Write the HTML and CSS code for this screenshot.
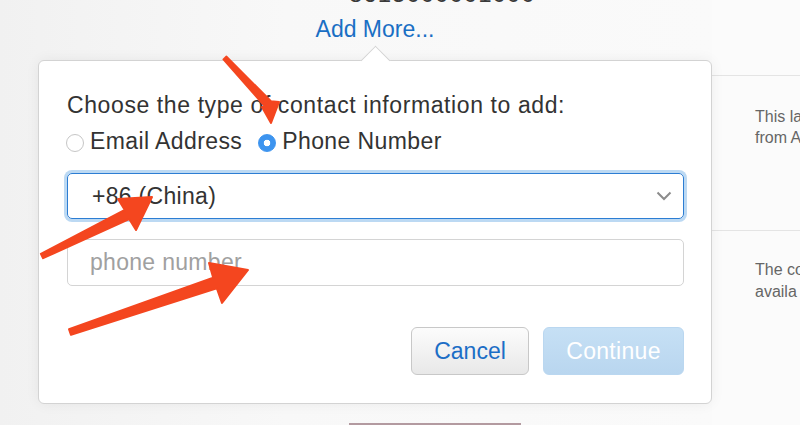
FILE: index.html
```html
<!DOCTYPE html>
<html lang="en">

<head>
    <meta charset="UTF-8">
    <meta name="viewport" content="width=device-width, initial-scale=1.0">
    <title>Add More</title>
    <link rel="stylesheet" href="styles.css">
</head>

<body>
    <div class="page">
        <div class="main">
            <div class="peek"><span>+8615000001000</span></div>
            <div class="add-more">Add More...</div>
            <div class="popover">
                <p class="prompt">Choose the type of contact information to add:</p>
                <div class="choices">
                    <label class="choice"><span class="radio"></span>Email Address</label>
                    <label class="choice"><span class="radio checked"></span>Phone Number</label>
                </div>
                <div class="select">
                    <span>+86 (China)</span>
                    <svg width="16" height="10" viewBox="0 0 16 10">
                        <path d="M1.5 1.5 L8 8 L14.5 1.5" fill="none" stroke="#8c8c8c" stroke-width="2" />
                    </svg>
                </div>
                <div class="field">phone number</div>
                <div class="actions">
                    <button class="btn cancel">Cancel</button>
                    <button class="btn continue">Continue</button>
                </div>
            </div>
            <div class="foot-bar"></div>
        </div>
        <div class="side">
            <div class="side-row first">
                <p>This la</p>
                <p>from A</p>
            </div>
            <div class="side-row second">
                <p>The co</p>
                <p>availa</p>
            </div>
        </div>
    </div>
    <!-- red annotation arrows drawn over the screenshot -->
    <svg class="marks" width="800" height="425" viewBox="0 0 800 425">
        <g fill="#f4461f" stroke="#f4461f" stroke-width="2" stroke-linejoin="round">
            <polygon points="226.5,56.6 270.9,101.3 279,102 271,123 262,107 265.1,106.7 223.5,59.4" />
            <polygon points="40.9,253.8 124.8,210 118,199 152,197 136,230 129.2,219 43.1,258.2" />
            <polygon points="69,329.2 213.2,277.8 209,263 248,270 222,303 216.8,288.2 71,334.8" />
        </g>
    </svg>
</body>

</html>
```

FILE: styles.css
```css
* {
    margin: 0;
    padding: 0;
    box-sizing: border-box;
}

body {
    width: 800px;
    height: 425px;
    overflow: hidden;
    position: relative;
    background: #f3f3f3;
    font-family: "Liberation Sans", Arial, sans-serif;
    color: #333;
}

.page {
    display: grid;
    grid-template-columns: 712px 88px;
    height: 425px;
}

.main {
    padding-left: 38px;
    background: linear-gradient(90deg, #f1f1f1 0, #f8f8f8 40%, #fafafa 100%);
}

.peek {
    height: 4px;
    overflow: hidden;
    padding-left: 296px;
    font-size: 24px;
    line-height: 24px;
    letter-spacing: 1px;
    color: #3a3a3a;
}

.peek span {
    display: block;
    margin-top: -18px;
}

.add-more {
    height: 56px;
    padding-top: 11px;
    text-align: center;
    font-size: 23px;
    line-height: 28px;
    color: #1a6fc4;
}

.popover {
    position: relative;
    width: 674px;
    height: 344px;
    background: #fff;
    border: 1px solid #d3d3d3;
    border-radius: 6px;
    padding: 30px 27px 28px 28px;
    box-shadow: 0 0 14px rgba(0, 0, 0, .06);
}

.popover::before {
    content: "";
    position: absolute;
    left: 326px;
    top: -11px;
    width: 20px;
    height: 20px;
    background: #fff;
    border-top: 1px solid #d3d3d3;
    border-left: 1px solid #d3d3d3;
    transform: rotate(45deg);
}

.prompt {
    font-size: 23px;
    line-height: 28px;
    letter-spacing: .6px;
}

.choices {
    display: flex;
    margin-top: 8px;
    font-size: 23px;
    line-height: 28px;
    letter-spacing: .4px;
}

.choice {
    display: flex;
    align-items: center;
}

.choice + .choice {
    margin-left: 17px;
}

.radio {
    width: 18px;
    height: 18px;
    margin: 3px 6px 0 -1px;
    border: 1px solid #c6c6c6;
    border-radius: 50%;
    background: #fff;
}

.radio.checked {
    border-color: #3d94ef;
    background: radial-gradient(circle, #fff 0, #fff 3px, #3d94ef 3.6px);
}

.select {
    display: flex;
    align-items: center;
    justify-content: space-between;
    height: 46px;
    margin-top: 18px;
    padding: 0 11px 0 24px;
    border: 1px solid #2c7dd3;
    border-radius: 5px;
    box-shadow: 0 0 0 3px #bcd9f3;
    font-size: 23px;
    line-height: 28px;
    letter-spacing: .3px;
}

.field {
    display: flex;
    align-items: center;
    height: 47px;
    margin-top: 20px;
    padding-left: 22px;
    border: 1px solid #d4d4d4;
    border-radius: 5px;
    font-size: 23px;
    letter-spacing: .3px;
    color: #a0a0a0;
}

.actions {
    display: flex;
    justify-content: flex-end;
    gap: 14px;
    margin-top: 41px;
}

.btn {
    height: 48px;
    border-radius: 6px;
    font-family: "Liberation Sans", Arial, sans-serif;
    font-size: 23px;
    line-height: 28px;
}

.cancel {
    width: 118px;
    border: 1px solid #c8c8c8;
    background: linear-gradient(#fcfcfc, #e8e8e8);
    color: #1c6ec6;
}

.continue {
    width: 141px;
    border: 1px solid #bad7f0;
    background: linear-gradient(#c6e0f5, #b9d6ef);
    color: #fff;
    letter-spacing: .3px;
}

.foot-bar {
    width: 172px;
    height: 2px;
    margin: 19px 0 0 311px;
    background: #b39aa0;
}

.side {
    background: #fbfbfb;
    color: #666;
    font-size: 16px;
    white-space: nowrap;
    overflow: hidden;
}

.side-row {
    padding-left: 43px;
    border-top: 1px solid #e4e4e4;
}

.side-row.first {
    height: 155px;
    margin-top: 75px;
    padding-top: 30px;
    line-height: 21px;
}

.side-row.second {
    padding-top: 28px;
    line-height: 22px;
}

.marks {
    position: absolute;
    left: 0;
    top: 0;
    pointer-events: none;
}
```
